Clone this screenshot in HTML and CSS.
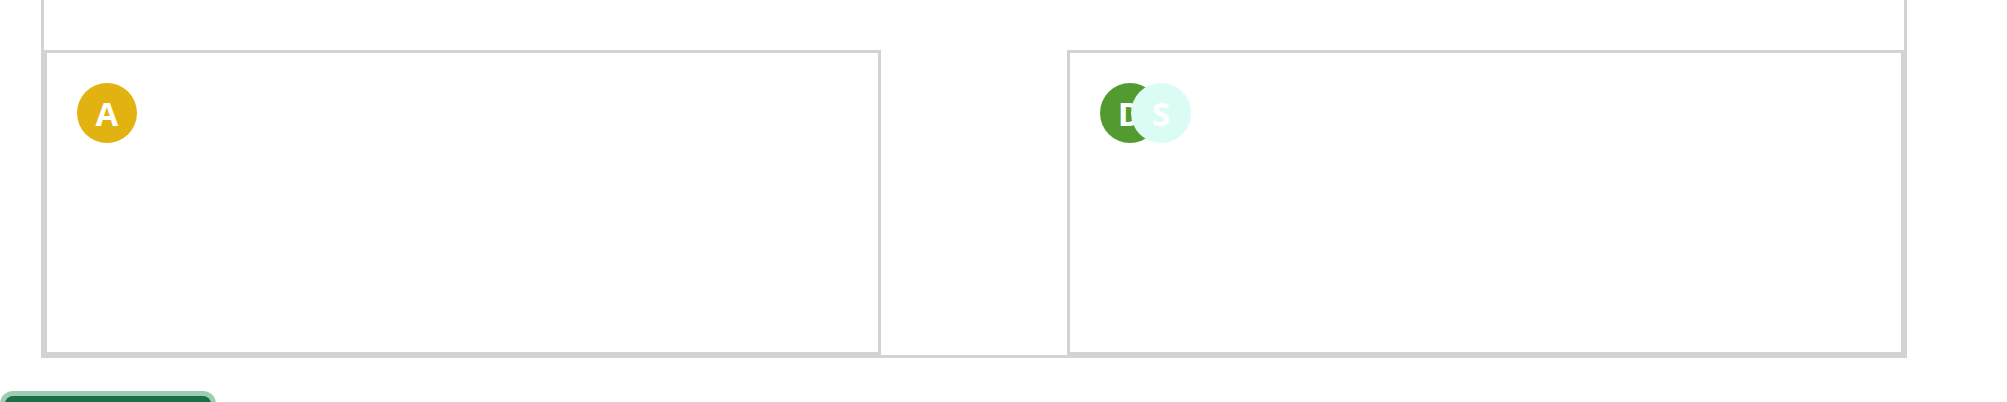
FILE: index.html
```html
<!DOCTYPE html>
<html>
<head>
<meta charset="utf-8">
<link rel="stylesheet" href="styles.css">
</head>
<body>
<div class="board">
  <div class="row">
    <div class="card">
      <div class="avatars">
        <span class="av av-a">A</span>
      </div>
    </div>
    <div class="card">
      <div class="avatars">
        <span class="av av-d">D</span>
        <span class="av av-s">S</span>
      </div>
    </div>
  </div>
</div>
<div class="actions">
  <button class="btn" type="button"></button>
</div>
</body>
</html>
```
FILE: styles.css
```css
html, body {
  margin: 0;
  padding: 0;
  background: #ffffff;
  font-family: "Open Sans", "Liberation Sans", sans-serif;
}

.board {
  margin-left: 41px;
  width: 1866px;
  box-sizing: border-box;
  border: 3px solid #d3d3d3;
  border-top: none;
  padding-top: 50px;
}

.row {
  display: flex;
  justify-content: space-between;
}

.card {
  width: 45%;
  height: 305px;
  box-sizing: border-box;
  border: 3px solid #d3d3d3;
  padding: 30px;
}

.avatars {
  display: flex;
}

.av {
  width: 60px;
  height: 60px;
  border-radius: 50%;
  display: flex;
  align-items: center;
  justify-content: center;
  color: #ffffff;
  font-size: 33px;
  font-weight: 700;
  line-height: 1;
}

.av-a {
  background: #e2b310;
}

.av-d {
  background: #519b31;
}

.av-s {
  background: #dbfcf5;
  margin-left: -29px;
}

.actions {
  padding-top: 38px;
  padding-left: 5px;
}

.btn {
  display: block;
  width: 206px;
  height: 44px;
  border: none;
  border-radius: 8px;
  background: #1b6e45;
  box-shadow: 0 0 0 5px #9ccdb3;
  padding: 0;
}
```
